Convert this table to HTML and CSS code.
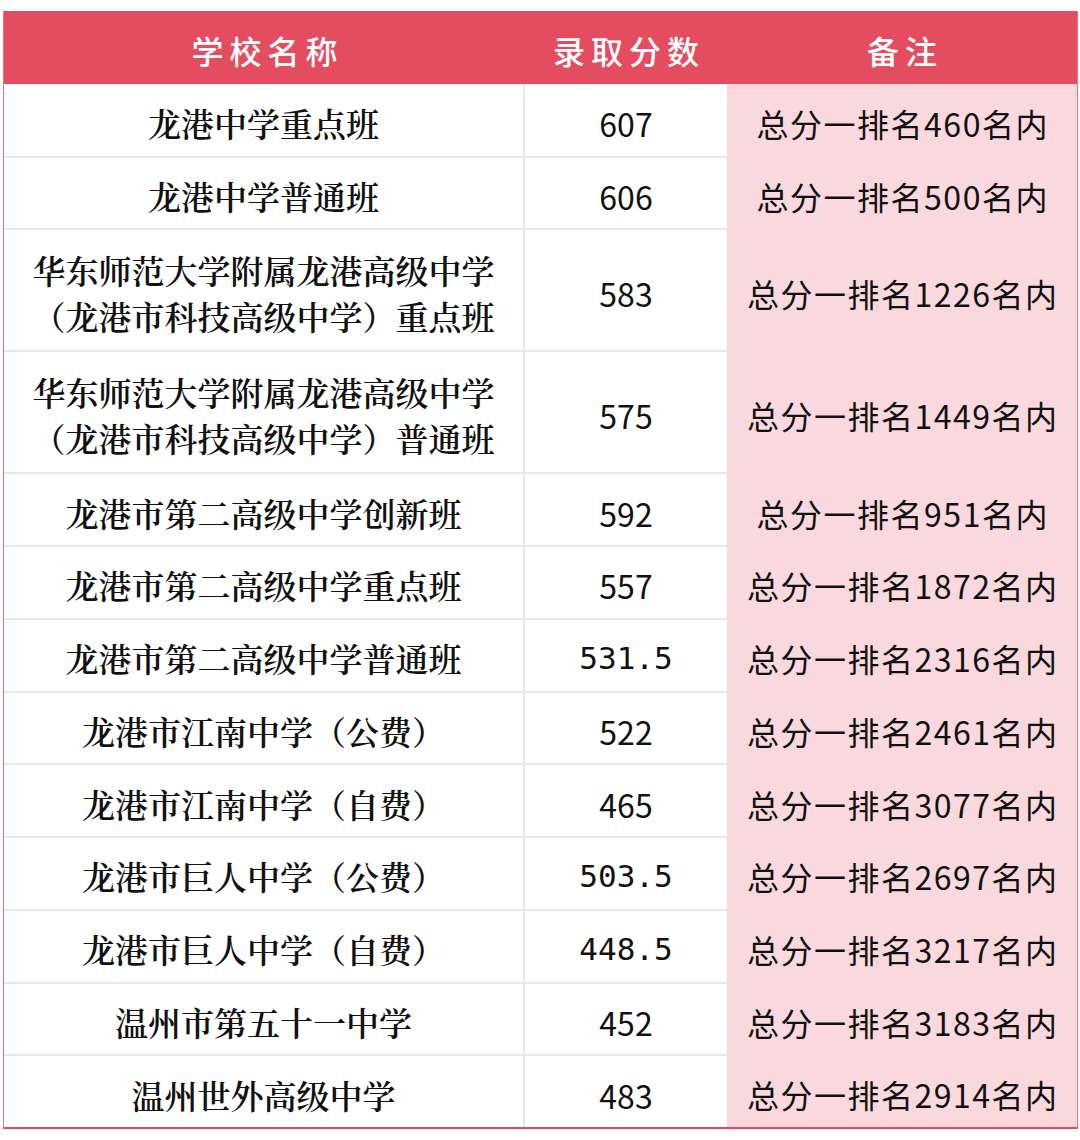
FILE: index.html
```html
<!DOCTYPE html>
<html lang="zh-CN">
<head>
<meta charset="utf-8">
<title>录取分数</title>
<link rel="stylesheet" href="styles.css">
</head>
<body>
<div class="table">
  <div class="row head">
    <div class="cell">学校名称</div>
    <div class="cell">录取分数</div>
    <div class="cell">备注</div>
  </div>
  <div class="row first">
    <div class="cell name">龙港中学重点班</div>
    <div class="cell score">607</div>
    <div class="cell note">总分一排名460名内</div>
  </div>
  <div class="row">
    <div class="cell name">龙港中学普通班</div>
    <div class="cell score">606</div>
    <div class="cell note">总分一排名500名内</div>
  </div>
  <div class="row tall">
    <div class="cell name">华东师范大学附属龙港高级中学<br>（龙港市科技高级中学）重点班</div>
    <div class="cell score">583</div>
    <div class="cell note">总分一排名1226名内</div>
  </div>
  <div class="row tall">
    <div class="cell name">华东师范大学附属龙港高级中学<br>（龙港市科技高级中学）普通班</div>
    <div class="cell score">575</div>
    <div class="cell note">总分一排名1449名内</div>
  </div>
  <div class="row">
    <div class="cell name">龙港市第二高级中学创新班</div>
    <div class="cell score">592</div>
    <div class="cell note">总分一排名951名内</div>
  </div>
  <div class="row">
    <div class="cell name">龙港市第二高级中学重点班</div>
    <div class="cell score">557</div>
    <div class="cell note">总分一排名1872名内</div>
  </div>
  <div class="row">
    <div class="cell name">龙港市第二高级中学普通班</div>
    <div class="cell score mono">531.5</div>
    <div class="cell note">总分一排名2316名内</div>
  </div>
  <div class="row">
    <div class="cell name">龙港市江南中学（公费）</div>
    <div class="cell score">522</div>
    <div class="cell note">总分一排名2461名内</div>
  </div>
  <div class="row">
    <div class="cell name">龙港市江南中学（自费）</div>
    <div class="cell score">465</div>
    <div class="cell note">总分一排名3077名内</div>
  </div>
  <div class="row">
    <div class="cell name">龙港市巨人中学（公费）</div>
    <div class="cell score mono">503.5</div>
    <div class="cell note">总分一排名2697名内</div>
  </div>
  <div class="row">
    <div class="cell name">龙港市巨人中学（自费）</div>
    <div class="cell score mono">448.5</div>
    <div class="cell note">总分一排名3217名内</div>
  </div>
  <div class="row">
    <div class="cell name">温州市第五十一中学</div>
    <div class="cell score">452</div>
    <div class="cell note">总分一排名3183名内</div>
  </div>
  <div class="row last">
    <div class="cell name">温州世外高级中学</div>
    <div class="cell score">483</div>
    <div class="cell note">总分一排名2914名内</div>
  </div>
</div>
</body>
</html>
```

FILE: styles.css
```css
* { box-sizing: border-box; }

html, body {
  margin: 0;
  padding: 0;
  background: #ffffff;
}

.table {
  margin: 11px 0 0 3px;
  width: 1075px;
  border-left: 1px solid #e8707f;
  border-right: 1px solid #e8707f;
  border-bottom: 2px solid #e44c60;
  display: flex;
  flex-direction: column;
}

.row {
  display: grid;
  grid-template-columns: 521px 202px 350px;
  height: 72.75px;
}

.row.first {
  height: 73.5px;
}

.row.tall {
  height: 122px;
}

.row.last {
  height: 71px;
}

.cell {
  display: flex;
  align-items: center;
  justify-content: center;
  text-align: center;
  color: #111111;
}

.head {
  height: 73px;
  background: #e44c60;
}

.head .cell {
  color: #ffffff;
  font-family: "Noto Sans CJK SC", "Noto Sans", sans-serif;
  font-size: 32px;
  font-weight: 500;
  letter-spacing: 6px;
  padding-left: 6px;
  padding-top: 4px;
}

.name {
  font-family: "Noto Serif CJK SC", "Noto Sans CJK SC", serif;
  font-size: 33px;
  line-height: 46px;
  font-weight: 600;
  border-right: 2px solid #e8e8e8;
  border-bottom: 2px solid #e8e8e8;
  padding-top: 6px;
}

.score {
  font-family: "Noto Sans CJK SC", "Noto Sans", sans-serif;
  font-size: 32px;
  border-bottom: 2px solid #e8e8e8;
  padding-top: 6px;
}

.score.mono {
  font-family: "DejaVu Sans Mono", "Liberation Mono", monospace;
  font-size: 31px;
}

.note {
  background: #f9d9de;
  font-family: "Noto Sans CJK SC", "Noto Sans", sans-serif;
  font-size: 32px;
  letter-spacing: 1.5px;
  padding-left: 1.5px;
  padding-top: 4px;
}

.last .name,
.last .score {
  border-bottom: none;
}
```
